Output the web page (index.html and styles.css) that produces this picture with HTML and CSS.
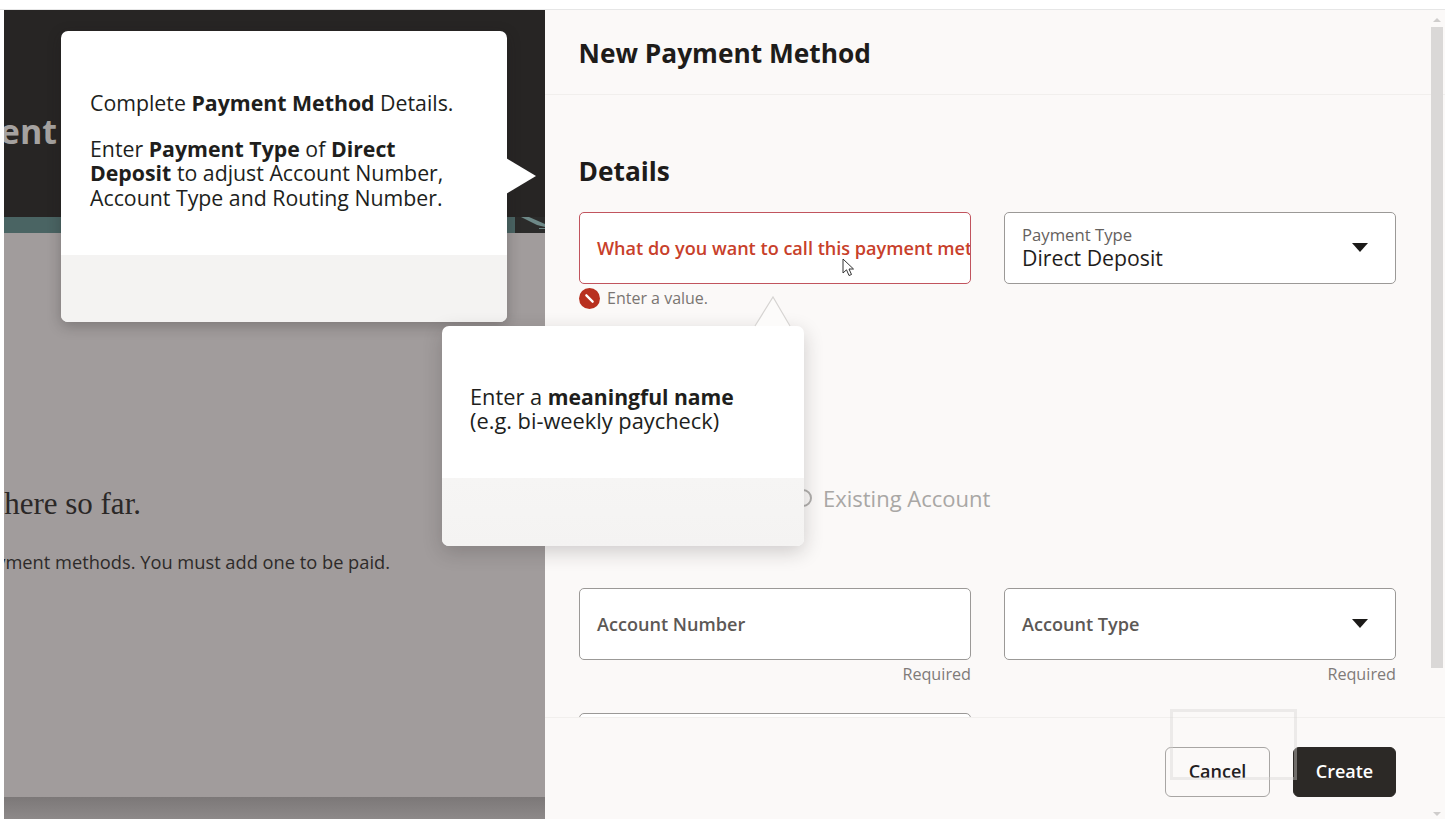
FILE: index.html
```html
<!DOCTYPE html>
<html lang="en">
<head>
<meta charset="utf-8">
<title>New Payment Method</title>
<link rel="stylesheet" href="styles.css">
</head>
<body>
<div class="strip"></div>
<div class="stage">
  <main class="page">
    <header class="banner">
      <h1 class="page-title">Payment</h1>
    </header>
    <div class="teal"><svg class="teal-art" width="30" height="16" viewBox="0 0 30 16"><path d="M0 0H30V16H0Z" fill="#2b2b2a"/><path d="M6 0H14L30 7V10L22 8Z" fill="#6d8887"/><path d="M24 11H30V12H24Z" fill="#6d8887"/></svg></div>
    <section class="empty">
      <h2 class="empty-title">You have nothing here so far.</h2>
      <p class="empty-text">You don't have any payment methods. You must add one to be paid.</p>
    </section>
    <div class="page-foot"></div>
  </main>

  <aside class="panel">
    <div class="panel-head"><h2 class="panel-title">New Payment Method</h2></div>
    <div class="panel-body">
      <h3 class="section-title">Details</h3>
      <div class="row row-top">
        <div class="col">
          <div class="field field-error"><span class="error-label">What do you want to call this payment method?</span></div>
          <div class="msg">
            <svg class="msg-icon" width="21" height="21" viewBox="0 0 20 20"><circle cx="10" cy="10" r="10" fill="#b8301f"/><path d="M7 7L13 13" stroke="#fff" stroke-width="2.200" stroke-linecap="round"/></svg>
            <span>Enter a value.</span>
          </div>
        </div>
        <div class="col">
          <div class="field field-select">
            <div class="select-text"><span class="small-label">Payment Type</span><span class="value">Direct Deposit</span></div>
            <span class="caret"></span>
          </div>
        </div>
      </div>
      <div class="radios">
        <span class="radio"></span><span class="radio-text">Existing Account</span>
      </div>
      <div class="row row-acct">
        <div class="col">
          <div class="field"><span class="label">Account Number</span></div>
          <div class="req">Required</div>
        </div>
        <div class="col">
          <div class="field field-select"><span class="label">Account Type</span><span class="caret"></span></div>
          <div class="req">Required</div>
        </div>
      </div>
      <div class="row">
        <div class="col"><div class="field"></div></div>
      </div>
    </div>
    <div class="panel-foot">
      <button class="btn btn-ghost">Cancel</button>
      <button class="btn btn-solid">Create</button>
    </div>
  </aside>

  <div class="scrollbar">
    <span class="sb-arrow sb-up"></span>
    <span class="sb-thumb"></span>
    <span class="sb-arrow sb-down"></span>
  </div>

  <div class="callout callout-one">
    <div class="callout-body">
      <p class="callout-p">Complete <b>Payment Method</b> Details.</p>
      <p class="callout-p">Enter <b>Payment Type</b> of <b>Direct Deposit</b> to adjust Account Number, Account Type and Routing Number.</p>
    </div>
    <div class="callout-foot"></div>
    <svg class="arrow-right" width="32" height="36" viewBox="0 0 32 36"><path d="M0 0L30 18L0 36Z" fill="#fff"/></svg>
  </div>

  <div class="callout callout-two">
    <svg class="arrow-up" width="38" height="31" viewBox="0 0 38 31"><path d="M1 30L19 1L36 30" fill="#fcfbfa" stroke="#d6d4d2" stroke-width="1.200"/><path d="M2 30.500H35V31H2Z" fill="#fff"/></svg>
    <div class="callout-body body-two">
      <p class="callout-p">Enter a <b>meaningful name</b><br>(e.g. bi-weekly paycheck)</p>
    </div>
    <div class="callout-foot foot-two"></div>
  </div>

  <div class="ghost-rect"></div>
  <svg class="cursor" width="14" height="20" viewBox="0 0 14 20"><path d="M1 1V15L4.500 11.800L7 17.500L9.500 16.500L7 11H11.500Z" fill="#fff" stroke="#333" stroke-width="1"/></svg>
</div>
</body>
</html>
```
FILE: styles.css
```css
* { box-sizing: border-box; }
html, body { margin: 0; height: 100%; overflow: hidden; background: #fff; }
body { font-family: "Open Sans", "Noto Sans", sans-serif; color: #201e1c; }
h1, h2, h3, p { margin: 0; }

.strip { height: 10px; background: #fff; border-bottom: 1px solid #e6e6e6; }
.stage { position: relative; display: flex; height: 809px; padding-left: 4px; }

.page { width: 541px; flex: none; display: flex; flex-direction: column; overflow: hidden; background: #a19c9c; }
.banner { height: 207px; flex: none; background: #272524; display: flex; justify-content: flex-end; padding: 97px 488px 0 0; overflow: hidden; }
.page-title { font-size: 34px; line-height: 48px; font-weight: 700; color: #a5a2a0; white-space: nowrap; }
.teal { height: 16px; flex: none; background: #4a6463; display: flex; justify-content: flex-end; }
.teal-art { display: block; }
.empty { flex: 1; padding-top: 252px; display: flex; flex-direction: column; align-items: flex-end; }
.empty-title { font: 400 31px/38px "Liberation Serif", "DejaVu Serif", serif; color: #2b2827; white-space: nowrap; margin-right: 404px; }
.empty-text { font-size: 18.250px; line-height: 24px; color: #2d2a29; white-space: nowrap; margin-top: 27px; margin-right: 155px; }
.page-foot { height: 22px; flex: none; background: linear-gradient(#7c7878, #8d8989); }

.panel { width: 900px; flex: none; display: flex; flex-direction: column; background: #fbf9f8; }
.panel-head { height: 85px; flex: none; padding: 25px 34px 0; border-bottom: 1px solid #f1efed; }
.panel-title { font-size: 26.300px; line-height: 36px; font-weight: 700; color: #1e1c1a; margin-left: -.5px; }
.panel-body { flex: 1; min-height: 0; overflow: hidden; padding: 0 49px 0 34px; }
.section-title { font-size: 26.300px; line-height: 36px; font-weight: 700; margin-top: 58px; margin-left: -.5px; color: #1e1c1a; }
.row { display: grid; grid-template-columns: 392px 392px; column-gap: 33px; }
.row-top { margin-top: 23px; height: 285px; }
.row-acct { height: 125px; }
.field { height: 72px; background: #fff; border: 1px solid #9b9997; border-radius: 5px; padding: 0 17px; display: flex; align-items: center; justify-content: space-between; overflow: hidden; }
.field-error { border-color: #c1545e; }
.error-label { font-size: 18.100px; font-weight: 600; color: #c8402a; white-space: nowrap; }
.label { font-size: 18.100px; font-weight: 600; color: #5c5855; white-space: nowrap; }
.msg { display: flex; align-items: center; gap: 7px; margin-top: 4px; font-size: 16px; line-height: 21px; color: #7a7572; }
.msg-icon { flex: none; }
.select-text { display: flex; flex-direction: column; }
.small-label { font-size: 16.700px; line-height: 20px; color: #65615e; margin-top: -2px; }
.value { font-size: 21.250px; line-height: 26px; color: #1f1d1b; margin-bottom: -2px; }
.caret { width: 0; height: 0; border-left: 8px solid transparent; border-right: 8px solid transparent; border-top: 9px solid #1b1a18; margin-right: 10px; margin-top: -2px; }
.radios { height: 91px; display: flex; align-items: flex-start; padding-left: 215px; gap: 11px; }
.radio { width: 18px; height: 18px; margin-top: -8px; flex: none; border: 2px solid #b0aeac; border-radius: 50%; }
.radio-text { font-size: 22px; line-height: 28px; margin-top: -13px; color: #a9a7a5; white-space: nowrap; }
.req { text-align: right; font-size: 16.200px; line-height: 20px; margin-top: 4px; color: #7f7b78; }

.panel-foot { height: 102px; flex: none; display: flex; justify-content: flex-end; align-items: flex-start; gap: 23px; padding: 29px 49px 0 0; border-top: 1px solid #f1efed; background: #fbf9f8; }
.btn { height: 50px; border-radius: 6px; font: 600 18px "Open Sans", "Noto Sans", sans-serif; padding: 0 0 2px; }
.btn-ghost { width: 105px; background: transparent; border: 1px solid #a8a6a4; color: #22201e; }
.btn-solid { width: 103px; background: #2c2926; border: 1px solid #2c2926; color: #fff; }

.scrollbar { position: absolute; top: 7px; bottom: 0; left: 1431px; width: 12px; display: flex; flex-direction: column; align-items: center; }
.sb-thumb { position: absolute; top: 10px; height: 641px; width: 12px; background: #dad8d7; }
.sb-arrow { position: absolute; width: 0; height: 0; border-left: 4px solid transparent; border-right: 4px solid transparent; }
.sb-up { top: 1px; border-bottom: 4px solid #cfcdcc; }
.sb-down { bottom: 3px; border-top: 4px solid #cfcdcc; }

.callout { position: absolute; background: #fff; border-radius: 7px; display: flex; flex-direction: column; box-shadow: 0 4px 14px rgba(30, 25, 25, .28); }
.callout-one { left: 61px; top: 21px; width: 446px; height: 291px; }
.callout-two { left: 442px; top: 316px; width: 362px; height: 220px; box-shadow: 0 6px 20px rgba(30, 25, 25, .2); }
.callout-body { flex: none; height: 224px; padding: 60px 29px 0; font-size: 21.300px; line-height: 24.500px; color: #201e1c; }
.body-two { height: 152px; padding: 59px 28px 0; font-size: 21.800px; line-height: 24px; }
.body-two b { font-size: .97em; }
.callout-p + .callout-p { margin-top: 21px; }
.callout-p b { font-weight: 700; }
.callout-foot { flex: 1; background: #f4f3f2; border-radius: 0 0 7px 7px; }
.foot-two { background: linear-gradient(#f6f5f4, #f4f3f2); }
.arrow-right { position: absolute; left: 445px; top: 127px; }
.arrow-up { position: absolute; left: 312px; top: -30px; }

.ghost-rect { position: absolute; left: 1170px; top: 699px; width: 127px; height: 71px; border: 3px solid rgba(215, 213, 211, .4); }
.cursor { position: absolute; left: 842px; top: 248px; }
```
